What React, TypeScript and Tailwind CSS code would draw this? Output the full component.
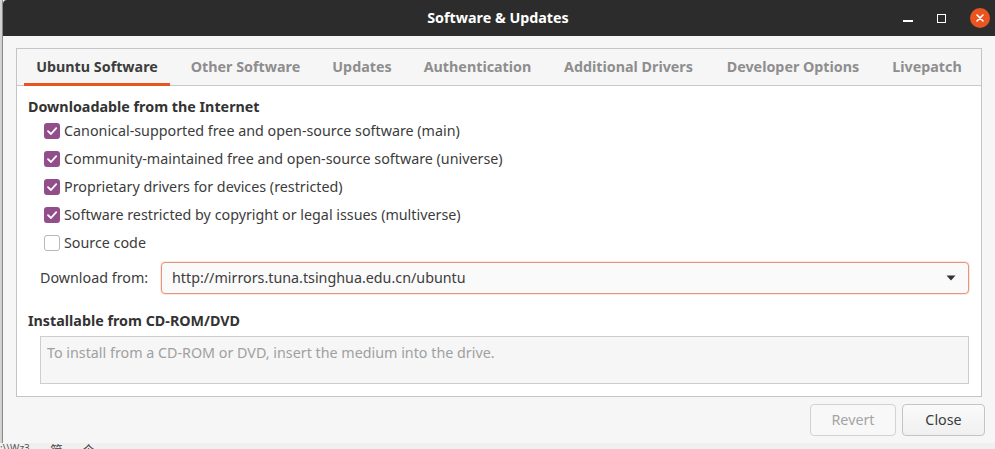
import React from 'react';

const tabs = [
  { label: 'Ubuntu Software', w: 'w-[146px]', active: true },
  { label: 'Other Software', w: 'w-[135px]' },
  { label: 'Updates', w: 'w-[82px]' },
  { label: 'Authentication', w: 'w-[133px]' },
  { label: 'Additional Drivers', w: 'w-[153px]' },
  { label: 'Developer Options', w: 'w-[160px]' },
  { label: 'Livepatch', w: 'w-[92px]' },
];

const sources = [
  { label: 'Canonical-supported free and open-source software (main)', checked: true },
  { label: 'Community-maintained free and open-source software (universe)', checked: true },
  { label: 'Proprietary drivers for devices (restricted)', checked: true },
  { label: 'Software restricted by copyright or legal issues (multiverse)', checked: true },
  { label: 'Source code', checked: false },
];

function CheckBox({ checked }: { checked: boolean }) {
  if (!checked) {
    return <span className="w-[16px] h-[16px] rounded-[3px] border border-[#b8b8b8] bg-white shrink-0" />;
  }
  return (
    <span className="w-[16px] h-[16px] rounded-[3px] bg-[#924d8b] shrink-0 flex items-center justify-center">
      <svg width="12" height="12" viewBox="0 0 12 12">
        <path d="M2 6.2 L5 9 L10.2 3.2" fill="none" stroke="#fff" strokeWidth="1.8" strokeLinecap="round" strokeLinejoin="round" />
      </svg>
    </span>
  );
}

export default function App() {
  return (
    <div className="w-[995px] h-[449px] overflow-hidden bg-[#e4e4e4] font-['Noto_Sans',sans-serif] text-[14.3px]">
      <div className="flex h-[443px]">
        {/* desktop fragment on the left */}
        <div className="w-[3px] bg-[#d4d4d4] border-r border-[#9a9a9a]" />

        {/* window */}
        <div className="flex-1 flex flex-col bg-[#f6f6f6] shadow-[0_1px_2px_rgba(0,0,0,0.35)]">
          {/* title bar */}
          <div className="h-[36px] bg-[#2c2c2c] rounded-tl-[4px] flex items-center relative shrink-0">
            <div className="flex-1 text-center text-white font-bold text-[14.3px] pr-[2px]">Software &amp; Updates</div>
            <div className="absolute right-0 top-0 h-[36px] flex items-center">
              <span className="w-[10px] h-[2px] bg-white mr-[24px] mt-[6px]" />
              <span className="w-[9px] h-[9px] border-[1.5px] border-white mr-[24px]" />
              <span className="w-[20px] h-[20px] rounded-full bg-[#e95420] flex items-center justify-center mr-[5px]">
                <svg width="10" height="10" viewBox="0 0 10 10">
                  <path d="M2 2 L8 8 M8 2 L2 8" stroke="#fff" strokeWidth="1.6" strokeLinecap="round" />
                </svg>
              </span>
            </div>
          </div>

          {/* body */}
          <div className="flex-1 flex flex-col pl-[13px] pr-[13px] pt-[12px]">
            <div className="border border-[#c4c4c4] bg-white flex flex-col h-[349px]">
              {/* tabs */}
              <div className="h-[37px] bg-[#f6f6f6] border-b border-[#c8c8c8] flex pl-[7px] gap-[8px] shrink-0">
                {tabs.map(t => (
                  <div
                    key={t.label}
                    className={`${t.w} h-[37px] pt-[2px] flex items-center justify-center font-bold whitespace-nowrap border-b-[3px] ${
                      t.active ? 'border-[#e95420] text-[#3d3d3d]' : 'border-transparent text-[#8e8e8e]'
                    }`}
                  >
                    {t.label}
                  </div>
                ))}
              </div>

              {/* content */}
              <div className="flex flex-col pl-[11px] pr-[12px] pt-[11px] text-[#3c3c3c]">
                <div className="font-bold text-[#333] leading-[20px]">Downloadable from the Internet</div>
                <div className="flex flex-col pl-[16px]">
                  {sources.map(s => (
                    <div key={s.label} className="h-[28px] flex items-center gap-[4px]">
                      <CheckBox checked={s.checked} />
                      <span className="whitespace-nowrap">{s.label}</span>
                    </div>
                  ))}
                </div>

                <div className="flex items-center pl-[12px] mt-[5px]">
                  <span className="w-[121px] shrink-0">Download from:</span>
                  <div className="flex-1 h-[32px] rounded-[4px] border border-[#e5957c] bg-[#fafafa] shadow-[0_0_0_1px_rgba(233,84,32,0.15)] flex items-center pl-[10px] pr-[12px]">
                    <span className="flex-1">http://mirrors.tuna.tsinghua.edu.cn/ubuntu</span>
                    <svg width="10" height="6" viewBox="0 0 10 6">
                      <path d="M0.5 0.5 L9.5 0.5 L5 5.5 Z" fill="#333" />
                    </svg>
                  </div>
                </div>

                <div className="font-bold text-[#333] leading-[20px] mt-[17px]">Installable from CD-ROM/DVD</div>
                <div className="ml-[12px] mt-[5px] h-[48px] border border-[#cdcdcd] bg-[#f6f6f6] px-[6px] pt-[5px] text-[#a0a0a0]">
                  To install from a CD-ROM or DVD, insert the medium into the drive.
                </div>
              </div>
            </div>

            {/* action buttons */}
            <div className="flex justify-end gap-[6px] pt-[7px] -mr-[3px]">
              <button className="w-[86px] h-[32px] rounded-[4px] border border-[#d2d2d2] bg-[#f8f8f8] text-[#a4a4a4]">Revert</button>
              <button className="w-[83px] h-[32px] rounded-[4px] border border-[#c4c4c4] bg-gradient-to-b from-[#fafafa] to-[#f0f0f0] text-[#3c3c3c]">Close</button>
            </div>
          </div>
        </div>
      </div>

      {/* desktop fragment below the window */}
      <div className="h-[6px] relative overflow-hidden bg-[#f0f0f0]">
        <span className="absolute left-[0px] top-[0px] text-[10px] leading-[10px] text-[#555]">:\\Wz3</span>
        <span className="absolute left-[50px] top-[0px] text-[13px] leading-[13px] text-[#444] font-['Noto_Sans_CJK_SC',sans-serif]">简</span>
        <span className="absolute left-[82px] top-[0px] text-[13px] leading-[13px] text-[#444] font-['Noto_Sans_CJK_SC',sans-serif]">个</span>
      </div>
    </div>
  );
}
